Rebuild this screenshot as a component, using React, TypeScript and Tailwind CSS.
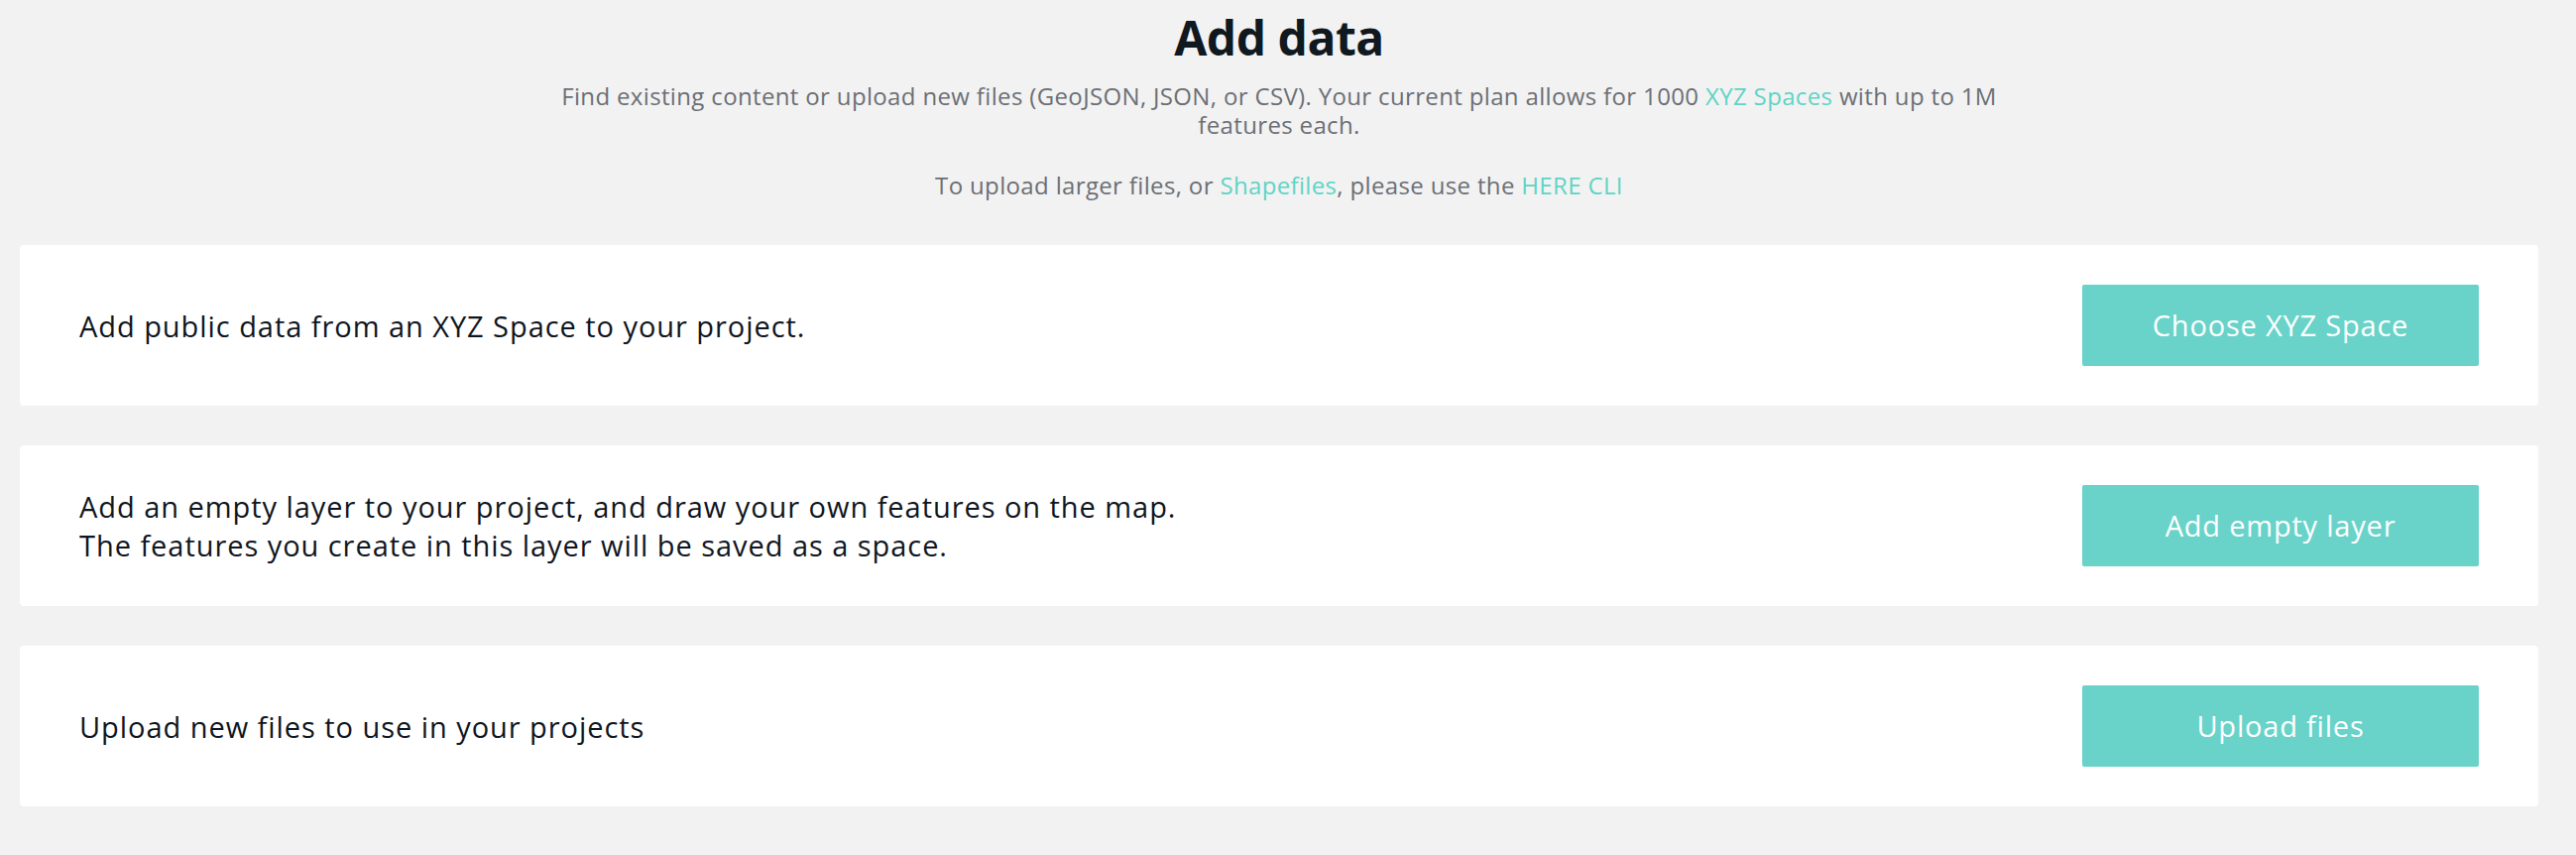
export default function App() {
  const cards = [
    {
      text: ['Add public data from an XYZ Space to your project.'],
      button: 'Choose XYZ Space',
    },
    {
      text: [
        'Add an empty layer to your project, and draw your own features on the map.',
        'The features you create in this layer will be saved as a space.',
      ],
      button: 'Add empty layer',
    },
    {
      text: ['Upload new files to use in your projects'],
      button: 'Upload files',
    },
  ];

  return (
    <div
      className="min-h-screen bg-[#f2f2f2] pl-[20px] pr-[38px] pt-[8px] pb-[48px]"
      style={{ fontFamily: '"Open Sans", "Noto Sans", sans-serif' }}
    >
      {/* Header */}
      <div className="text-center">
        <h1 className="text-[48px] leading-[60px] font-bold tracking-[-0.5px] text-[#101820]">Add data</h1>
        <p className="mx-auto mt-[14px] max-w-[1460px] text-[24px] leading-[29px] tracking-[0.35px] text-[#6c6f75]">
          Find existing content or upload new files (GeoJSON, JSON, or CSV). Your current plan allows for 1000{' '}
          <span className="text-[#5fd4c6]">XYZ Spaces</span> with up to 1M features each.
        </p>
        <p className="mt-[32px] text-[24px] leading-[29px] tracking-[0.35px] text-[#6c6f75]">
          To upload larger files, or <span className="text-[#5fd4c6]">Shapefiles</span>, please use the{' '}
          <span className="text-[#5fd4c6]">HERE CLI</span>
        </p>
      </div>

      {/* Options */}
      <div className="mt-[46px] flex flex-col gap-[40px]">
        {cards.map(card => (
          <div
            key={card.button}
            className="flex h-[162px] items-center justify-between rounded-[4px] bg-white px-[60px]"
          >
            <div className="text-[29px] leading-[39px] tracking-[0.95px] text-[#0f1621]">
              {card.text.map(line => (
                <div key={line}>{line}</div>
              ))}
            </div>
            <button className="h-[82px] w-[400px] rounded-[2px] bg-[#69d3c9] text-[29px] tracking-[0.8px] text-white">
              {card.button}
            </button>
          </div>
        ))}
      </div>
    </div>
  );
}
